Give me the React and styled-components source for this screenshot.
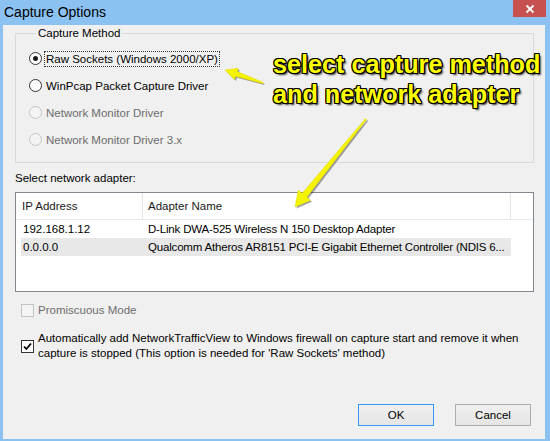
import React from "react";
import styled, { createGlobalStyle } from "styled-components";

const GlobalStyle = createGlobalStyle`
  html, body {
    margin : 0;
    padding : 0;
    background : #ffffff;
  }
  body {
    font-family : "Liberation Sans", Arial, sans-serif;
  }
`;

const methods = [
  { label : "Raw Sockets (Windows 2000/XP)", checked : true, focused : true },
  { label : "WinPcap Packet Capture Driver" },
  { label : "Network Monitor Driver", disabled : true },
  { label : "Network Monitor Driver 3.x", disabled : true }
];

const adapters = [
  { ip : "192.168.1.12", name : "D-Link DWA-525 Wireless N 150 Desktop Adapter" },
  { ip : "0.0.0.0", name : "Qualcomm Atheros AR8151 PCI-E Gigabit Ethernet Controller (NDIS 6...", selected : true }
];

// tapered arrow: tail is thin, widens to the head
const arrowPoints = (tx, ty, px, py, headLen, headHalf, shaftHalf) => {
  const dx = px - tx;
  const dy = py - ty;
  const len = Math.sqrt(dx * dx + dy * dy);
  const ux = dx / len;
  const uy = dy / len;
  const nx = uy;
  const ny = -ux;
  const bx = px - ux * headLen;
  const by = py - uy * headLen;
  const pts = [
    [tx + nx * 0.6, ty + ny * 0.6],
    [bx + nx * shaftHalf, by + ny * shaftHalf],
    [bx + nx * headHalf, by + ny * headHalf],
    [px, py],
    [bx - nx * headHalf, by - ny * headHalf],
    [bx - nx * shaftHalf, by - ny * shaftHalf],
    [tx - nx * 0.6, ty - ny * 0.6]
  ];
  return pts.map((p) => p[0].toFixed(1) + "," + p[1].toFixed(1)).join(" ");
};

class App extends React.Component {
  render() {
    const arrow1 = arrowPoints(263, 83, 225, 70, 12, 6, 2.5);
    const arrow2 = arrowPoints(366, 119, 295, 207, 15, 8, 3);

    return (
      <>
        <GlobalStyle />
        <Window>
          <TitleBar>
            <Title>Capture Options</Title>
            <CloseButton>
              <svg width="10" height="10" viewBox="0 0 10 10">
                <path d="M1.5 1.5 L8.5 8.5 M8.5 1.5 L1.5 8.5" stroke="#ffffff" strokeWidth="1.8" fill="none" />
              </svg>
            </CloseButton>
          </TitleBar>

          <Body>
            <GroupBox>
              <Legend>Capture Method</Legend>
              <RadioList>
                {methods.map((m) => (
                  <RadioRow key={m.label}>
                    <Radio $checked={m.checked} $disabled={m.disabled} />
                    <OptionText $disabled={m.disabled} $focused={m.focused}>{m.label}</OptionText>
                  </RadioRow>
                ))}
              </RadioList>
            </GroupBox>

            <SectionLabel>Select network adapter:</SectionLabel>

            <ListView>
              <ListHeader>
                <HeaderCell $width={127} $pad={6}>IP Address</HeaderCell>
                <HeaderCell $width={368} $pad={5}>Adapter Name</HeaderCell>
                <HeaderCell $last />
              </ListHeader>
              {adapters.map((a) => (
                <ListRow key={a.ip} $selected={a.selected}>
                  <IpCell>{a.ip}</IpCell>
                  <NameCell>{a.name}</NameCell>
                </ListRow>
              ))}
            </ListView>

            <CheckRow $first>
              <CheckBox $disabled />
              <OptionText $disabled>Promiscuous Mode</OptionText>
            </CheckRow>

            <CheckRow>
              <CheckBox>
                <svg width="9" height="9" viewBox="0 0 9 9">
                  <path d="M1 4.5 L3.4 7 L8 1.5" stroke="#000000" strokeWidth="1.8" fill="none" />
                </svg>
              </CheckBox>
              <MultiLineText>
                Automatically add NetworkTrafficView to Windows firewall on capture start and remove it when
                <br />
                capture is stopped (This option is needed for 'Raw Sockets' method)
              </MultiLineText>
            </CheckRow>

            <ButtonRow>
              <DialogButton $default>OK</DialogButton>
              <DialogButton>Cancel</DialogButton>
            </ButtonRow>
          </Body>

          <Annotation>
            select capture method
            <br />
            and network adapter
          </Annotation>

          <ArrowLayer width="550" height="441" viewBox="0 0 550 441">
            <g transform="translate(1.5,1.5)" fill="#000000" opacity="0.35">
              <polygon points={arrow1} />
              <polygon points={arrow2} />
            </g>
            <g fill="#f4f400" stroke="#e0d800" strokeWidth="0.5">
              <polygon points={arrow1} />
              <polygon points={arrow2} />
            </g>
          </ArrowLayer>
        </Window>
      </>
    );
  }
}

const Window = styled.div`
  position : relative;
  width : 550px;
  height : 441px;
  box-sizing : border-box;
  background : #8bc2f2;
  padding : 0 5px 2px 3px;
  display : flex;
  flex-direction : column;
  overflow : hidden;
`;

const TitleBar = styled.div`
  height : 25px;
  display : flex;
  align-items : flex-start;
  justify-content : space-between;
  flex-shrink : 0;
`;

const Title = styled.div`
  font-family : "Liberation Sans", Arial, sans-serif;
  font-size : 14px;
  color : #000000;
  margin : 4px 0 0 1px;
  line-height : 16px;
`;

const CloseButton = styled.div`
  width : 33px;
  height : 17px;
  background : #c75050;
  display : flex;
  align-items : center;
  justify-content : center;
  margin-right : -1px;
`;

const Body = styled.div`
  flex : 1;
  background : #f0f0f0;
  padding : 1px 11px 13px 12px;
  display : flex;
  flex-direction : column;
  font-size : 11.5px;
  color : #000000;
`;

const GroupBox = styled.fieldset`
  margin : 0;
  padding : 5px 0 9px 13px;
  border : 1px solid #d9d9d9;
  min-width : 0;
`;

const Legend = styled.legend`
  margin-left : 7px;
  padding : 0 2px;
  line-height : 14px;
  font-size : 11.5px;
`;

const RadioList = styled.div`
  display : flex;
  flex-direction : column;
`;

const RadioRow = styled.div`
  height : 27px;
  display : flex;
  align-items : center;
`;

const Radio = styled.span`
  width : 13px;
  height : 13px;
  box-sizing : border-box;
  border-radius : 50%;
  border : 1px solid ${(p) => (p.$disabled ? "#c4c4c4" : "#333333")};
  background : ${(p) => (p.$disabled ? "#f4f4f4" : "#ffffff")};
  display : flex;
  align-items : center;
  justify-content : center;
  flex-shrink : 0;

  &::after {
    content : "";
    display : ${(p) => (p.$checked ? "block" : "none")};
    width : 5px;
    height : 5px;
    border-radius : 50%;
    background : #1a1a1a;
  }
`;

const OptionText = styled.span`
  margin-left : 3px;
  padding : 0 1px;
  line-height : 14px;
  white-space : nowrap;
  color : ${(p) => (p.$disabled ? "#6d6d6d" : "#000000")};
  outline : ${(p) => (p.$focused ? "1px dotted #333333" : "none")};
`;

const SectionLabel = styled.div`
  margin-top : 8px;
  line-height : 14px;
`;

const ListView = styled.div`
  margin-top : 7px;
  height : 100px;
  box-sizing : border-box;
  border : 1px solid #828790;
  background : #ffffff;
  display : flex;
  flex-direction : column;
`;

const ListHeader = styled.div`
  height : 26px;
  display : flex;
  border-bottom : 1px solid #e3ebf3;
  flex-shrink : 0;
`;

const HeaderCell = styled.div`
  width : ${(p) => (p.$width ? p.$width + "px" : "auto")};
  flex : ${(p) => (p.$last ? "1" : "none")};
  box-sizing : border-box;
  padding-left : ${(p) => (p.$pad || 0)}px;
  border-right : ${(p) => (p.$last ? "none" : "1px solid #e5e5e5")};
  display : flex;
  align-items : center;
  color : #1a1a1a;
`;

const ListRow = styled.div`
  height : 18px;
  margin-left : 5px;
  width : 490px;
  display : flex;
  align-items : center;
  background : ${(p) => (p.$selected ? "#e8e8e8" : "transparent")};
`;

const IpCell = styled.div`
  width : 122px;
  flex-shrink : 0;
  padding-left : 2px;
  box-sizing : border-box;
`;

const NameCell = styled.div`
  flex : 1;
  min-width : 0;
  padding-left : 5px;
  white-space : nowrap;
  letter-spacing : -0.18px;
`;

const CheckRow = styled.div`
  display : flex;
  align-items : center;
  margin-top : ${(p) => (p.$first ? "11px" : "14px")};
  margin-left : 6px;
`;

const CheckBox = styled.span`
  width : 13px;
  height : 13px;
  box-sizing : border-box;
  border : 1px solid ${(p) => (p.$disabled ? "#c4c4c4" : "#333333")};
  background : ${(p) => (p.$disabled ? "#f4f4f4" : "#ffffff")};
  display : flex;
  align-items : center;
  justify-content : center;
  flex-shrink : 0;
`;

const MultiLineText = styled.div`
  margin-left : 4px;
  line-height : 15px;
  white-space : nowrap;
`;

const ButtonRow = styled.div`
  margin-top : auto;
  margin-right : 3px;
  display : flex;
  justify-content : flex-end;
  gap : 21px;
`;

const DialogButton = styled.button`
  width : 76px;
  height : 22px;
  box-sizing : border-box;
  font-family : "Liberation Sans", Arial, sans-serif;
  font-size : 11.5px;
  color : #000000;
  padding : 0;
  border : 1px solid ${(p) => (p.$default ? "#3399ff" : "#acacac")};
  background : linear-gradient(#f0f0f0, #e5e5e5);
  border-radius : 0;
`;

const Annotation = styled.div`
  position : absolute;
  left : 273px;
  top : 49px;
  font-family : "Liberation Sans", Arial, sans-serif;
  font-weight : bold;
  font-size : 25.2px;
  line-height : 30px;
  color : #ffff00;
  white-space : nowrap;
  text-shadow :
    -1px -1px 0 #000, 1px -1px 0 #000, -1px 1px 0 #000, 1px 1px 0 #000,
    0 -1px 0 #000, 0 1px 0 #000, -1px 0 0 #000, 1px 0 0 #000,
    2px 2px 2px rgba(0, 0, 0, 0.8);
`;

const ArrowLayer = styled.svg`
  position : absolute;
  left : 0;
  top : 0;
  pointer-events : none;
`;

export default App;
